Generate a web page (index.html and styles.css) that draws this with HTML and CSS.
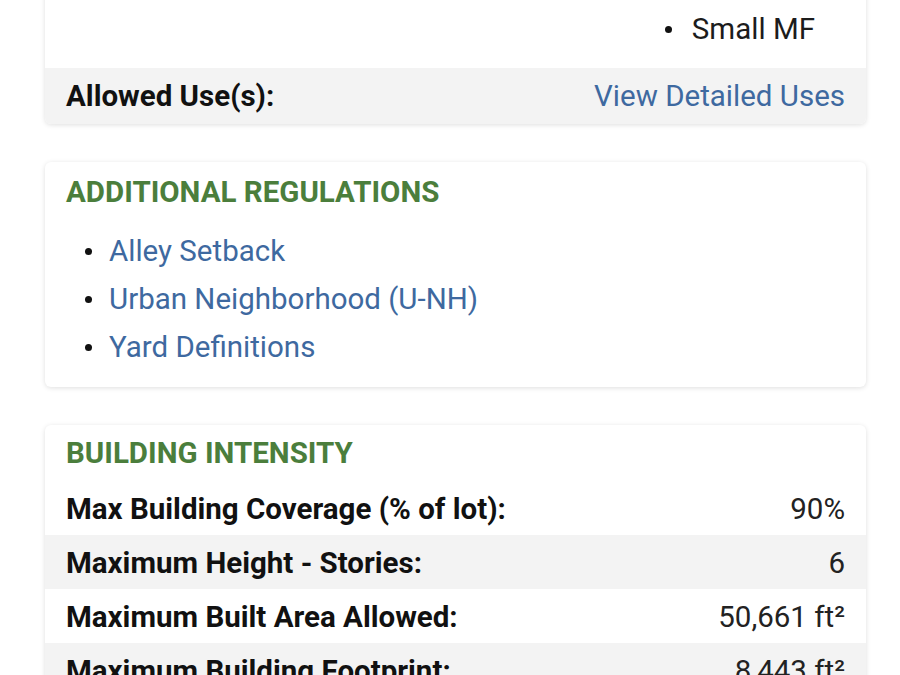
FILE: index.html
```html
<!DOCTYPE html>
<html lang="en">
<head>
<meta charset="utf-8">
<title>Zoning details</title>
<link rel="stylesheet" href="styles.css">
</head>
<body>
<main class="page">
  <section class="card">
    <div class="row row-top">
      <span class="label"></span>
      <ul class="value-list">
        <li>Small MF</li>
      </ul>
    </div>
    <div class="row row-alt">
      <span class="label">Allowed Use(s):</span>
      <a class="link" href="#">View Detailed Uses</a>
    </div>
  </section>

  <section class="card">
    <h2 class="card-title">ADDITIONAL REGULATIONS</h2>
    <ul class="link-list">
      <li><a class="link" href="#">Alley Setback</a></li>
      <li><a class="link" href="#">Urban Neighborhood (U-NH)</a></li>
      <li><a class="link" href="#">Yard Definitions</a></li>
    </ul>
  </section>

  <section class="card">
    <h2 class="card-title title-tight">BUILDING INTENSITY</h2>
    <div class="row">
      <span class="label">Max Building Coverage (% of lot):</span>
      <span class="value">90%</span>
    </div>
    <div class="row row-alt">
      <span class="label">Maximum Height - Stories:</span>
      <span class="value">6</span>
    </div>
    <div class="row">
      <span class="label">Maximum Built Area Allowed:</span>
      <span class="value">50,661 ft²</span>
    </div>
    <div class="row row-alt">
      <span class="label">Maximum Building Footprint:</span>
      <span class="value">8,443 ft²</span>
    </div>
  </section>
</main>
</body>
</html>
```

FILE: styles.css
```css
html, body {
  margin: 0;
  padding: 0;
  background: #ffffff;
}

body {
  font-family: "Roboto", "Liberation Sans", sans-serif;
  color: #141414;
  overflow: hidden;
}

.page {
  display: flex;
  flex-direction: column;
  gap: 38px;
  margin: -20px 34px 0 45px;
}

.card {
  background: #ffffff;
  border-radius: 6px;
  box-shadow: 0 1px 5px rgba(0, 0, 0, 0.13);
  overflow: hidden;
}

.row {
  display: flex;
  justify-content: space-between;
  align-items: center;
  padding: 12px 21px 10px;
  font-size: 29.5px;
  line-height: 32px;
}

.row-alt {
  background: #f3f3f3;
}

.card:first-child .row-alt {
  padding-top: 12px;
  padding-bottom: 12px;
}

.row-top {
  padding-top: 31px;
  padding-bottom: 21px;
}

.label {
  font-weight: 700;
  color: #111111;
}

.value {
  color: #222222;
}

.value-list {
  margin: 0;
  padding: 0 30px 0 0;
  list-style: none;
  line-height: 36px;
  color: #1c1c1c;
}

.value-list li,
.link-list li {
  display: flex;
  align-items: center;
}

.value-list li::before,
.link-list li::before {
  content: "";
  width: 7px;
  height: 7px;
  border-radius: 50%;
  background: #111111;
  margin-right: 17px;
  flex: none;
}

.value-list li::before {
  margin-right: 20px;
}

.link {
  color: #3e69a0;
  text-decoration: none;
}

.card-title {
  margin: 14px 21px 0;
  font-size: 29.5px;
  line-height: 32px;
  font-weight: 700;
  color: #4b7e3c;
}

.title-tight {
  margin-top: 12px;
  margin-bottom: 12px;
}

.link-list {
  margin: 19px 21px 16px;
  padding: 0 0 0 19px;
  list-style: none;
  font-size: 29.5px;
  line-height: 48px;
}
```
